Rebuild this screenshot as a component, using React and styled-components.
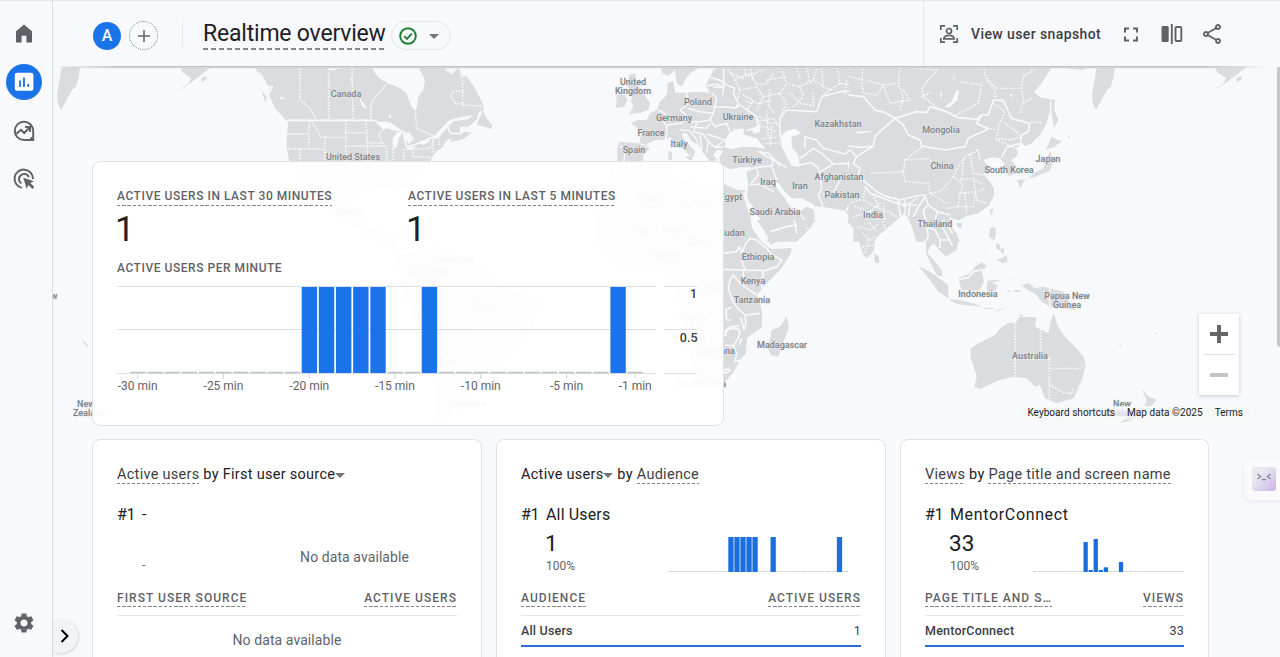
import React from "react";
import styled, { createGlobalStyle } from "styled-components";
import { MdSettings, MdOutlineShare, MdFullscreen } from "react-icons/md";

const Global = createGlobalStyle`
  * { box-sizing: border-box; }
  body { margin: 0; background: #f8f9fc; font-family: Roboto, "Liberation Sans", sans-serif; color: #202124; overflow: hidden; }
`;

const Page = styled.div`
  position: relative;
  display: flex;
  height: 657px;
  overflow: hidden;
  border-top: 1px solid #e6e8eb;
  background: #f8f9fc;
`;

const Sidebar = styled.nav`
  width: 53px;
  flex: none;
  display: flex;
  flex-direction: column;
  align-items: center;
  gap: 12.4px;
  padding: 15px 5px 16px 0;
  border-right: 1px solid #dadce0;
`;

const NavItem = styled.div`
  width: 36px;
  height: 36px;
  border-radius: 50%;
  display: flex;
  align-items: center;
  justify-content: center;
  color: ${(p) => (p.$active ? "#fff" : "#5f6368")};
  background: ${(p) => (p.$active ? "#1a73e8" : "transparent")};
  margin-top: ${(p) => (p.$last ? "auto" : 0)};
`;

const Main = styled.main`
  position: relative;
  flex: 1;
  min-width: 0;
  display: flex;
  flex-direction: column;
`;

const Header = styled.header`
  position: relative;
  z-index: 2;
  flex: none;
  height: 66px;
  display: flex;
  align-items: center;
  background: #f8f9fc;
  padding-left: 40px;
  &::after {
    content: "";
    position: absolute;
    left: 0;
    right: 12px;
    bottom: -2px;
    height: 3px;
    background: linear-gradient(#b4b6b9, #d5d7da 50%, transparent);
    mask-image: linear-gradient(90deg, transparent, #000 60px, #000 calc(100% - 60px), transparent);
  }
`;

const Avatar = styled.div`
  width: 28px;
  height: 28px;
  margin-top: 3px;
  border-radius: 50%;
  background: #1a73e8;
  color: #fff;
  font-size: 16px;
  font-weight: 500;
  display: flex;
  align-items: center;
  justify-content: center;
`;

const AddButton = styled.div`
  width: 29px;
  height: 29px;
  margin: 3px 0 0 8px;
  border-radius: 50%;
  border: 1px dotted #80868b;
  display: flex;
  align-items: center;
  justify-content: center;
`;

const Separator = styled.div`
  width: 1px;
  height: 24px;
  margin: 0 20px 0 24px;
  background: #e4e6e9;
`;

const Title = styled.h1`
  margin: 0;
  height: 31px;
  font-size: 23px;
  line-height: 30px;
  font-weight: 400;
  letter-spacing: -0.2px;
  white-space: nowrap;
  background: repeating-linear-gradient(90deg, #80868b 0 5px, transparent 5px 8px) 0 100% / 100% 2px no-repeat;
`;

const StatusPill = styled.div`
  width: 60px;
  height: 29px;
  margin: 3px 0 0 5px;
  border: 1px solid #e3e5e8;
  border-radius: 15px;
  display: flex;
  align-items: center;
  gap: 12px;
  padding-left: 7px;
`;

const Actions = styled.div`
  margin-left: auto;
  width: 357px;
  height: 100%;
  border-left: 1px solid #e4e6e9;
  display: flex;
  align-items: center;
  color: #5f6368;
  padding-left: 15px;
`;

const ActionLabel = styled.span`
  margin: 0 18px 0 12px;
  width: 130px;
  font-size: 14px;
  letter-spacing: 0.4px;
  font-weight: 500;
  color: #3c4043;
  white-space: nowrap;
`;

const ActionIcon = styled.span`
  display: flex;
  width: 24px;
  margin-right: ${(p) => p.$gap || 0}px;
`;

const MapArea = styled.section`
  position: relative;
  flex: none;
  height: 359px;
  padding: 94px 0 0 39px;
`;

const MapSvg = styled.svg`
  position: absolute;
  left: 0;
  top: 0;
  display: block;
`;

const ZoomControl = styled.div`
  position: absolute;
  right: 41px;
  top: 247px;
  width: 40px;
  height: 81px;
  background: #fff;
  box-shadow: 0 1px 4px rgba(0, 0, 0, 0.2);
  display: flex;
  flex-direction: column;
`;

const ZoomButton = styled.div`
  flex: 1;
  display: flex;
  align-items: center;
  justify-content: center;
  color: ${(p) => (p.$off ? "#c4c4c4" : "#666")};
  &:first-child { background: linear-gradient(#e0e0e0, #e0e0e0) center bottom / 31px 1px no-repeat; }
`;

const Attribution = styled.div`
  position: absolute;
  right: 31px;
  top: 339px;
  height: 14px;
  display: flex;
  gap: 12px;
  padding: 0 6px;
  background: rgba(245, 245, 245, 0.75);
  font-size: 10px;
  line-height: 14px;
  letter-spacing: 0.05px;
  color: #202124;
  white-space: nowrap;
`;

const RealtimeCard = styled.div`
  position: relative;
  width: 632px;
  height: 265px;
  padding: 27px 24px 0;
  border: 1px solid #e0e2e6;
  border-radius: 8px;
  background: rgba(255, 255, 255, 0.945);
`;

const Totals = styled.div`
  display: flex;
`;

const Total = styled.div`
  width: 291.5px;
`;

const Caption = styled.div`
  width: fit-content;
  height: 17px;
  font-size: 12px;
  line-height: 15px;
  font-weight: 500;
  letter-spacing: 0.54px;
  color: #5f6368;
  white-space: nowrap;
  background: ${(p) =>
    p.$plain ? "none" : "repeating-linear-gradient(90deg, #80868b 0 3.4px, transparent 3.4px 5.2px) 0 100% / 100% 1px no-repeat"};
`;

const ColumnHead = styled(Caption)`
  line-height: 17px;
  letter-spacing: 1.03px;
`;

const BigNumber = styled.div`
  margin: 4px 0 0 -2px;
  font-size: 35px;
  line-height: 40px;
  height: 40px;
`;

const ChartCaption = styled.div`
  margin-top: 11px;
  height: 16px;
`;

const Cards = styled.div`
  display: flex;
  gap: 14px;
  padding: 13px 0 0 39px;
`;

const Card = styled.section`
  width: ${(p) => p.$width}px;
  height: 240px;
  flex: none;
  border: 1px solid #e0e2e6;
  border-radius: 8px;
  background: #fff;
  padding: 24px 24px 0;
`;

const CardTitle = styled.h2`
  margin: 0;
  height: 20px;
  display: flex;
  align-items: center;
  font-size: 14.5px;
  font-weight: 400;
  letter-spacing: 0.28px;
  line-height: 19px;
  color: #202124;
  white-space: pre;
`;

const Term = styled.span`
  color: #3c4043;
  background: repeating-linear-gradient(90deg, #80868b 0 3.4px, transparent 3.4px 5px) 0 100% / 100% 1px no-repeat;
`;

const Caret = styled.span`
  border: 5px solid transparent;
  border-top-color: #757575;
  border-bottom: 0;
  margin-top: 2px;
`;

const Rank = styled.div`
  display: flex;
  margin-top: 19px;
  font-size: 16px;
  line-height: 24px;
`;

const RankIndex = styled.span`
  width: 25px;
  letter-spacing: -0.3px;
`;

const RankName = styled.span`
  letter-spacing: ${(p) => p.$spacing || 0}px;
`;

const Metric = styled.div`
  display: flex;
  justify-content: space-between;
  height: 63px;
  padding: 3px 0 0 25px;
`;

const MetricValue = styled.div`
  margin-left: -1px;
  font-size: 22.5px;
  line-height: 27px;
`;

const MetricShare = styled.div`
  font-size: 12px;
  line-height: 18px;
  color: #5f6368;
`;

const MetricDash = styled(MetricShare)`
  padding-top: 26px;
`;

const Empty = styled.div`
  font-size: 14px;
  line-height: 20px;
  letter-spacing: 0.08px;
  color: #5f6368;
  padding: ${(p) => (p.$table ? "14px 0 0" : "17px 48px 0 0")};
  text-align: center;
`;

const TableHead = styled.div`
  display: flex;
  justify-content: space-between;
  height: 26px;
  border-bottom: 1px solid #e3e5e8;
`;

const TableRow = styled.div`
  display: flex;
  justify-content: space-between;
  height: 31px;
  font-size: 12.5px;
  line-height: 30px;
  font-weight: 500;
  letter-spacing: 0.2px;
  color: #3c4043;
  border-bottom: 2px solid #2a70d0;
`;

const RowValue = styled.span`
  font-weight: 400;
`;

const Drawer = styled.div`
  position: absolute;
  left: 53px;
  bottom: 4px;
  width: 25px;
  height: 34px;
  padding-right: 2px;
  border-radius: 0 17px 17px 0;
  background: #f1f3f4;
  box-shadow: 1px 1px 3px rgba(0, 0, 0, 0.15);
  display: flex;
  align-items: center;
  justify-content: center;
`;

const Helper = styled.div`
  position: absolute;
  right: 0;
  top: 458px;
  width: 36px;
  height: 41px;
  padding: 8px;
  border-radius: 8px 0 0 8px;
  background: #fafafc;
  box-shadow: 0 1px 4px rgba(0, 0, 0, 0.08);
`;

const Scrollbar = styled.div`
  position: absolute;
  right: -3px;
  top: 43px;
  width: 6px;
  height: 303px;
  border-radius: 3px;
  background: #c6c7c9;
`;

const LAND = "#dadce0";
const WATER = "#f8f9fc";

const LABELS = [
  ["Canada", 346, 97], ["United States", 353, 160],
  ["United", 633, 85], ["Kingdom", 633, 94], ["Poland", 698, 105], ["Germany", 674, 121],
  ["Ukraine", 738, 120], ["France", 651, 136], ["Italy", 679, 147], ["Spain", 634, 153],
  ["Kazakhstan", 838, 127], ["Mongolia", 941, 133], ["Türkiye", 747, 163], ["Iraq", 768, 185],
  ["Iran", 800, 189], ["Afghanistan", 839, 180], ["Pakistan", 842, 198], ["China", 942, 169],
  ["South Korea", 1009, 173], ["Japan", 1048, 162], ["Saudi Arabia", 775, 215], ["India", 873, 218],
  ["Thailand", 935, 227], ["Egypt", 731, 200], ["Sudan", 732, 236], ["Ethiopia", 758, 260],
  ["Kenya", 753, 284], ["Tanzania", 752, 303], ["Madagascar", 782, 348], ["Botswana", 715, 354],
  ["South Africa", 701, 387], ["Indonesia", 978, 297], ["Papua New", 1067, 299], ["Guinea", 1067, 308],
  ["Australia", 1030, 359], ["New", 1122, 407], ["Zealand", 1122, 416], ["New", 86, 407], ["Zealand", 89, 416],
  ["Mexico", 350, 215], ["Venezuela", 454, 262], ["Colombia", 426, 274], ["Brazil", 484, 310],
  ["Bolivia", 458, 333], ["Peru", 424, 317], ["Chile", 446, 365], ["Argentina", 466, 407],
  ["Algeria", 649, 201], ["Libya", 695, 205], ["Mali", 640, 233], ["Niger", 673, 233],
  ["Chad", 700, 245], ["Nigeria", 667, 258], ["DRC", 709, 290], ["Angola", 692, 321], ["Namibia", 690, 342],
];

const Arctic = () => (
  <g fill={LAND}>
    <path d="M62 66L80 66L79 75L76 87L72 90L67 99L61 110L58 104L57 95L59 83Z" />
    <path d="M180 66L213 66L205 72L200 76L192 82L186 86L172 94L180 89L189 83L191 78L182 72Z" />
    <path d="M201 78l5 -2l1 3l-5 3z" />
  </g>
);

const Provinces = styled.g`
  stroke-width: 5.5px;
  stroke-linecap: round;
  stroke-dasharray: 0.1 9;
`;

function WorldMap() {
  return (
    <MapSvg width="1227" height="363" viewBox="53 67 1227 363">
      <Arctic />
      <g transform="translate(1035 0)"><Arctic /></g>
      <g fill={LAND}>
        <path d="M290 162L425 162L410 185L395 190L360 185L350 200L365 225L395 235L400 255L350 225L310 190Z" />
        <path d="M395 255L440 245L480 265L500 285L540 300L535 325L510 350L490 370L460 400L445 425L435 420L440 350L420 330L405 295Z" />
        <path d="M610 168L650 163L672 162L672 175L700 185L724 184L738 190L745 190L744 198L750 215L752 228L760 240L768 247L772 249L792 248L790 255L780 270L765 285L757 295L760 303L762 312L762 327L747 338L746 353L740 360L733 373L724 383L705 390L695 380L685 340L680 310L675 285L660 268L620 268L600 250L595 225L605 190Z" />
      </g>

      <g transform="translate(260 60) scale(.33333)">
        <g fill={LAND}>
          <path d="M-20 18L0 45L18 75L30 82L27 105L45 145L70 172L85 190L82 215L79 250L85 290L90 310L508 310L520 285L535 270L548 262L555 245L575 232L570 246L610 237L635 218L615 215L600 222L600 200L625 200L650 180L655 160L672 148L668 130L645 85L628 60L618 48L608 52L598 18Z" />
          <path d="M650 195L660 170L668 150L680 175L697 195L695 208L675 200Z" />
          <path d="M5 90L20 112L18 130L8 105Z" />
        </g>
        <g fill={WATER}>
          <path d="M335 18L345 40L358 55L385 70L420 85L440 100L450 130L462 150L470 145L475 110L490 90L495 60L485 40L475 18Z" />
          <path d="M552 16L558 32L575 42L590 28L592 16Z" />
          <path d="M298 112L318 140L320 147L305 138Z" />
          <path d="M350 188L375 184L395 190L428 214L405 212L380 205L368 208Z" />
          <path d="M398 268L398 235L412 215L428 218L418 232L410 262Z" />
          <path d="M428 216L450 218L462 238L446 252L434 235Z" />
          <path d="M432 270L455 260L470 262L450 270Z M478 250L505 238L512 244L490 254Z" />
          <path d="M205 25L240 18L250 22L215 32Z M268 50L280 60L276 68Z M60 112l14 2v3h-14z" />
          <circle cx="390" cy="170" r="4" />
          <path d="M520 230L545 205L565 182L600 172L640 165L625 178L580 184L558 208L530 234Z" />
        </g>
        <g fill="none" stroke={WATER} strokeWidth="5" strokeLinejoin="round">
          <path d="M0 38L22 80L38 80L28 100M80 181H340L365 192L400 205L430 216L440 262L470 252L510 234L535 232L560 195L572 220L605 222" />
          <Provinces>
            <path d="M120 18V120L150 145L170 180M206 28V180M276 18L280 180M382 70L333 128V180M466 150L470 205L520 228M598 18L608 70V135L670 138M608 95L580 92L572 112L590 132L608 130" />
            <path d="M148 184L146 265M85 222H145M155 184L185 232H258M195 232V305M258 184V305M258 218H320M318 184L325 305M258 258H370M88 266L195 268M120 268V305M325 248L370 250L380 265V305M370 208L355 222L368 250M400 270V305M430 270L432 300M460 268L510 265L520 240M460 268L458 290L520 292M520 238V280M535 235L540 260" />
          </Provinces>
        </g>
      </g>

      <g transform="translate(600 60) scale(.33333)">
        <g fill={LAND}>
          <path d="M345 18H790V482L757 480L735 452L665 440L640 438L645 470L635 500L590 545L495 545L468 480L440 410L445 375L440 335L455 322L420 322L390 328L362 312L358 290L370 272L350 270L340 285L352 300L330 304L310 280L300 262L272 240L262 222L250 218L246 228L262 250L285 272L280 290L268 285L245 262L225 245L210 232L195 240L165 240L140 252L150 265L130 285L128 310H52L52 265L58 245L118 250L125 215L92 188L115 180L140 180L150 160L170 150L180 125L195 110L202 98L202 70L220 62L226 98L260 98L295 95L330 98L318 78L325 60L335 40Z" />
          <path d="M180 18L188 42L205 48L225 30L230 70L245 80L258 55L270 40L288 30L300 18Z" />
          <path d="M88 45L105 40L110 70L130 100L150 130L145 150L120 158L88 162L100 138L92 125L98 105L82 80Z" />
          <path d="M50 105L75 105L82 120L72 140L48 145Z" />
          <path d="M205 275h10l2 24h-12z M255 290l22 -3v14h-8z" />
          <path d="M330 60L360 70L365 95L330 98Z" />
        </g>
        <g fill={WATER}>
          <path d="M375 262L376 240L390 216L415 212L425 222L445 228L470 235L497 268L470 262L430 260L395 268Z" />
          <path d="M455 210L482 188L480 215L462 222Z M398 209L432 205L430 225L410 222Z" />
          <path d="M540 230L560 212L585 206L605 220L575 230L575 262L595 285L600 320L575 318L560 290L545 260Z" />
          <path d="M520 362L535 368L555 395L575 415L605 415L640 432L650 452L620 440L598 455L570 440L555 415L535 392Z" />
          <path d="M428 392L440 405L448 430L475 475L500 525L498 545L488 545L462 490L440 440Z" />
          <path d="M318 44L360 18L300 18L296 40L310 50Z" />
        </g>
        <g fill="none" stroke={WATER} strokeWidth="4.5" strokeLinejoin="round">
          <path d="M58 260L75 262L72 305M118 250L150 262M175 150L195 160L190 185L200 200L200 225L195 240M260 98L262 135L240 150L262 170L245 190L200 195M262 145L300 155L340 160M335 98L350 115L340 160L330 180L300 185L275 185M340 82L372 80L368 105M320 78L350 72L372 85M330 52L365 62L372 80M340 142L380 140L405 145L415 130L400 100L405 85L372 72L370 18M405 145L420 135L470 170L475 200L440 212M330 180L345 200L380 190L390 215M270 200L320 205L330 190M240 210L270 212L290 240L295 262M290 190L280 215L310 222L325 245M320 222L375 240L345 262L325 245L320 278M300 225L305 268M345 262L372 262" />
          <path d="M540 230V175L560 150L650 155L665 110L720 95L770 92L790 115M615 265V230L650 240L670 265L710 275L735 282L770 250L790 252M600 295L640 265L665 280L700 312M560 322L520 300L475 275M520 300L515 318L470 322L445 330M515 318L530 360M470 322L475 345L450 375L478 372L520 395M475 275L505 280L525 300L540 320M600 315L635 308L655 325L660 350L665 385L655 405L670 440M700 312L660 335M700 312L745 310L755 285L785 290M745 310L750 340L720 360L700 400L668 402M750 340L785 340M765 385L740 450L760 455M450 430L500 515L570 500L620 490L600 460M505 520L500 545M570 500L625 505" />
          <Provinces>
            <path d="M385 30L405 60L420 90L412 120M405 60L450 40L470 75L500 70L520 40M420 90L470 80L490 110L470 150M490 110L540 100L560 130L540 170M540 100L560 70L600 80L640 60L650 25M560 70L545 30M600 80L610 110L580 140M640 60L690 90L720 70L770 75M690 90L665 110M720 70L710 20M440 125L480 130L520 120M480 170L510 190L540 190M490 200L530 215M490 235L530 232M500 250L540 250M450 20L460 60M590 25L600 55M750 25L760 55L785 50M640 100L640 145M500 60L560 50" />
            <path d="M395 40L430 55M430 105L460 120L440 150M510 90L505 140L525 160M470 185L520 175L540 205M500 155L505 235M515 200L510 260M430 22L440 50L490 30M570 100L600 130L635 135M620 25L632 75M665 25L670 85M735 100L740 60" />
          </Provinces>
        </g>
      </g>

      <g transform="translate(850 60) scale(.33333)">
        <g fill={LAND}>
          <path d="M0 18H615L600 30L575 70L552 95L570 112L600 118L600 150L590 190L570 225L545 250L525 258L515 248L500 265L503 285L485 300L495 315L490 345L475 348L462 310L450 295L425 292L400 300L412 315L430 322L410 335L400 343L420 365L432 385L432 405L418 435L385 460L345 470L325 482L300 472L295 490L320 520L330 545L200 545L185 500L172 468L160 462L130 490L75 535L60 545H10V500L-5 490Z" />
          <path d="M603 118L615 120L613 150L625 180L612 205L605 160Z M588 268L605 230L635 245L610 262Z M600 272L610 300L600 332L555 350L535 355L552 340L580 325Z M500 360L525 358L512 385Z M418 450L430 443L425 468Z M318 490L338 488L325 505Z M422 503L437 503L434 540L420 530Z" />
          <path d="M635 16L720 16L700 30L660 26Z" />
          <circle cx="657" cy="231" r="3" />
        </g>
        <g fill={WATER}>
          <path d="M282 142L305 125L318 92L328 92L322 120L300 142Z M18 215l45 -3v4l-40 5z M270 95l5 0v20h-3z M480 102h6v8h-6z M308 55l12 -8l-10 14z" />
        </g>
        <g fill="none" stroke={WATER} strokeWidth="5" strokeLinejoin="round">
          <path d="M-5 105L40 110L75 150L105 158L135 175L200 155L230 158L240 140L290 155L320 172L380 178L395 165L415 165L430 120L460 122L485 175L540 190L535 215L515 225L512 250M135 175L160 195L175 225L210 240L215 258L285 270L345 260L355 235L415 207L380 190L395 165M135 175L95 210L75 230L70 258L20 290L0 270M-5 258L35 262L70 258M20 290L10 310L30 325L25 345L50 370L80 395L110 410L150 420L200 408L225 405L235 435L262 455L300 465M45 378L60 400L145 432L150 418M155 432L200 435M145 435L152 470M180 430L175 470M225 410L205 440L190 470M510 250L470 262L455 292M235 435L220 450L230 490M262 455L255 480L290 500L310 540M280 480L300 490" />
          <path d="M140 425L165 440L200 415M165 418V470" strokeWidth="4" />
          <Provinces>
            <path d="M0 50L35 60L40 100L80 105L100 75L50 60M40 20L35 60M100 75L145 70L150 20M145 70L160 110L150 150M100 75L120 130L180 120L160 90M205 25L260 30L215 85L220 110L270 150M215 110L245 95M320 165L385 130L395 75L330 65M400 20L410 60L435 90L435 115M410 55L440 85L515 85L520 50L560 25M515 85L520 130L510 160M520 130L545 115M430 130L465 155L445 200L440 240M465 190L500 215L515 235M440 235L480 240L515 230M545 185L580 190M440 240L500 265M415 205L440 210" />
            <path d="M65 340L160 335L165 300L215 262M160 335L165 365L235 370M165 300L240 295L245 320M235 370L240 400L270 395L310 350M310 350L330 310L345 290L385 270M340 300L335 360M360 285L370 340L400 345M385 270L390 300M335 360L370 355L400 375M310 350L340 375L330 400M330 400L380 395L405 385M370 355L380 420M330 400L325 440L290 445M240 400L290 430M325 440L370 440L375 400M380 420L410 430M345 400L350 460" />
            <path d="M10 470L60 455L90 430M45 385L40 420L75 440L115 455L140 470M30 420L0 430M60 455L70 490L30 510M70 490L100 480L130 485M30 510L45 540M100 430L105 480M80 470L95 510M50 480L65 530M15 440L45 450L50 500L20 520M70 405L85 440" />
          </Provinces>
        </g>
      </g>

      <g transform="translate(700 220) scale(.33333)">
        <g fill={LAND}>
          <path d="M440 0H585L540 40L525 60L520 95L500 115L490 105L475 60L460 25Z M522 100L535 108L538 128L525 130Z M170 0H350L320 25L290 42L250 58L210 75L205 50Z" />
          <path d="M260 290L267 320L235 410L212 405L205 385L215 330L240 320Z M655 138L690 155L745 195L745 235L715 215L690 180Z" />
        </g>
        <g fill="none" stroke={WATER} strokeWidth="5" strokeLinejoin="round">
          <path d="M72 100L110 95L118 80L125 100L135 75L150 55L170 60L200 85L210 100L245 120L232 140L195 152L135 150L125 120M72 148L130 150L130 180L120 190M190 152L185 205M90 180L100 165L120 190L135 200L170 225M90 180L85 205L95 235L110 262L135 285L180 280M135 285L138 310L132 330L122 290M95 262L78 270L80 300L92 300M72 335L92 320L118 318M75 350Q75 325 100 325T118 345T100 378L75 375M118 375L125 355M100 378L110 400L105 425L120 420M75 460Q70 445 85 448T75 460" />
          <path d="M210 35L260 20L285 15L290 40M280 0L290 20" />
          <Provinces><path d="M475 20L510 30L540 10M490 40L510 60L525 50M490 80L520 75M505 60L495 100M510 10L530 35M550 5L555 25" /></Provinces>
        </g>
      </g>

      <g transform="translate(920 220) scale(.33333)">
        <g fill={LAND}>
          <path d="M-30 0H90L100 30L115 65L110 90L78 110L60 92L42 70L30 80L22 98L45 125L65 150L68 170L50 165L35 135L20 105L16 60L-5 30Z" />
          <path d="M85 238L120 240L165 252L185 260L110 252Z M115 175L150 160L165 140L185 127L200 138L185 155L192 185L178 212L125 210Z M203 182L250 178L215 188L232 195L228 210L210 215L200 210Z M305 195L325 190L345 205L370 200L430 215L450 250L470 272L430 262L390 262L365 245L350 225L315 205Z" />
          <path d="M210 25L225 22L228 40L222 60L208 52Z M245 115L260 105L262 125L248 130L230 120Z M228 70l10 2l4 20l-12 -5z M240 88l12 -4v18l-8 -4z M195 105l8 -10l-4 10z M275 178l10 1l-8 3z M262 212l8 0v4h-8z M280 210l22 1v4h-20z M190 265l30 -2v4h-30z M225 272l38 -12l-30 14z M298 285l10 -2v5h-10z M110 12l15 0v12l-12 -3z" />
          <path d="M152 385L185 365L225 345L240 325L265 308L285 310L300 290L350 292L345 320L385 340L393 300L402 280L412 315L430 345L465 380L492 410L496 440L485 480L462 535L410 550L375 535L360 495L345 500L320 475L280 470L240 480L205 495L180 508L163 500L170 470L152 410Z" />
          <path d="M666 506L685 530L710 540L690 562L673 556L680 540Z M645 570L675 562L640 600L600 610Z M405 570L435 570L425 592L410 590Z M590 365L607 378L603 380Z M704 338h6v4h-6z M932 10l5 4v5z" />
        </g>
        <g fill="none" stroke={WATER} strokeWidth="5">
          <path d="M15 65L25 50L20 20L-10 0M20 20L45 30L60 60L88 60L70 25L50 5M60 60L60 85M88 60L98 78M70 0L98 40M118 178L145 172L160 155L190 148M389 205V262M25 98L40 108" />
          <Provinces><path d="M285 312V470M285 417H388M362 330V417M388 417V538M390 445L480 445L492 435M390 495L430 518L455 520L460 505" /></Provinces>
        </g>
      </g>

      <path d="M83 341l5 5" stroke={LAND} strokeWidth="1.5" />
      <g fontFamily="Roboto, sans-serif" fontSize="9" fontWeight="500" fill="#7c8186" stroke="#e6e8eb" strokeWidth="0.8" paintOrder="stroke" textAnchor="middle">
        {LABELS.map(([name, x, y]) => (
          <text key={name + x} x={x} y={y}>{name}</text>
        ))}
        <text x="54" y="299">w</text>
      </g>
    </MapSvg>
  );
}

const MINUTES = [...Array(30).keys()];
const ACTIVE = { 10: 1, 11: 1, 12: 1, 13: 1, 14: 1, 17: 1, 28: 1 };
const VIEWS = { 10: 30, 11: 2, 12: 33, 13: 2, 14: 4.7, 17: 10 };
const TICKS = [["-30 min", 20.7], ["-25 min", 106.5], ["-20 min", 192.3], ["-15 min", 278], ["-10 min", 363.8], ["-5 min", 449.5], ["-1 min", 518.2]];

const ChartSvg = styled.svg`
  display: block;
  overflow: visible;
  margin-top: ${(p) => p.$drop || 0}px;
`;

function MinuteChart() {
  return (
    <ChartSvg width="582" height="112" viewBox="0 0 582 112">
      {[9.5, 52.5, 96.5].map((y) => (
        <path key={y} d={`M0 ${y}H539M547 ${y}H580`} stroke="#dcdee1" />
      ))}
      {MINUTES.map((i) =>
        ACTIVE[i] ? (
          <rect key={i} x={13.2 + 17.15 * i} y="10" width="15.4" height="86" fill="#1a73e8" />
        ) : (
          <rect key={i} x={13.2 + 17.15 * i} y="94.7" width="15.4" height="1.6" fill="#c3c5c8" />
        )
      )}
      {TICKS.map(([label, x]) => (
        <g key={label}>
          <path d={`M${x} 97V102`} stroke="#d0d2d5" />
          <text x={x} y="113" fontSize="12" fill="#5f6368" textAnchor="middle">{label}</text>
        </g>
      ))}
      <g fontSize="12.5" fontWeight="500" fill="#3c4043" textAnchor="end">
        <text x="580" y="21">1</text>
        <text x="580.5" y="65">0.5</text>
      </g>
    </ChartSvg>
  );
}

function Sparkline({ pitch, width, data, unit, right }) {
  return (
    <ChartSvg $drop={4} width={pitch * 30 + right} height="38" viewBox={`0 0 ${pitch * 30 + right} 38`}>
      {MINUTES.map((i) =>
        data[i] ? (
          <rect key={i} x={pitch * i} y={38 - data[i] * unit} width={width} height={data[i] * unit} fill="#1a6fdf" />
        ) : (
          <rect key={i} x={pitch * i} y="37" width={width} height="1" fill="#d5d7da" />
        )
      )}
    </ChartSvg>
  );
}

const HomeIcon = () => (
  <svg width="24" height="24" viewBox="0 0 24 24" fill="currentColor"><path d="M4 20.6V9.2L12 2.6l8 6.6v11.400h-5.600v-6.800H9.600v6.800z" /></svg>
);
const ReportsIcon = () => (
  <svg width="24" height="24" viewBox="0 0 24 24"><rect x="2.800" y="2.800" width="18.600" height="18" rx="2" fill="#fff" /><path d="M8 10.500V17M12 7.500V17M16.200 14V17" stroke="#1a73e8" strokeWidth="1.800" /></svg>
);
const ExploreIcon = () => (
  <svg width="24" height="24" viewBox="0 0 24 24" fill="none" stroke="currentColor" strokeWidth="2"><path d="M12 2.700a9.200 9.200 0 1 0 0 18.400h9.200V12A9.200 9.200 0 0 0 12 2.700zM4.500 14.800L9 10.800l3.200 3.200 5.200-5.200M13 8h5v5" /><path d="M17 20.500l3.500-3.500v3.500z" fill="currentColor" stroke="none" /></svg>
);
const AdsIcon = () => (
  <svg width="24" height="24" viewBox="0 0 24 24" fill="none" stroke="currentColor" strokeWidth="2"><path d="M9.800 20.800A9.200 9.200 0 1 1 21 12M9.300 16.500A5.200 5.200 0 1 1 16.900 10" /><path d="M11.200 10.800l10.800 3.500-3.700 1.800 4 4-1.800 1.800-4-4-1.800 3.800z" fill="currentColor" stroke="none" /></svg>
);
const SnapshotIcon = () => (
  <svg width="20" height="20" viewBox="0 0 20 20" fill="none" stroke="currentColor" strokeWidth="1.700"><path d="M1.800 6V1.800H6M14 1.800h4.200V6M18.200 14v4.200H14M6 18.200H1.800V14" /><circle cx="10" cy="7" r="2.500" /><path d="M4.800 14.800c.4-2.400 2.600-3.400 5.200-3.400s4.800 1 5.200 3.400z" /></svg>
);
const CompareIcon = () => (
  <svg width="24" height="24" viewBox="0 0 24 24"><rect x="1.500" y="4" width="7.200" height="16" rx="1.500" fill="currentColor" /><path d="M11.800 2v20" stroke="currentColor" strokeWidth="1.900" /><rect x="15.500" y="5" width="5.800" height="14" rx="1" fill="none" stroke="currentColor" strokeWidth="1.900" /></svg>
);

export default function App() {
  return (
    <>
      <Global />
      <Page>
        <Sidebar>
          <NavItem><HomeIcon /></NavItem>
          <NavItem $active><ReportsIcon /></NavItem>
          <NavItem><ExploreIcon /></NavItem>
          <NavItem><AdsIcon /></NavItem>
          <NavItem $last><MdSettings size={24} /></NavItem>
        </Sidebar>
        <Main>
          <Header>
            <Avatar>A</Avatar>
            <AddButton>
              <svg width="12" height="12" viewBox="0 0 12 12"><path d="M6 0v12M0 6h12" stroke="#5f6368" strokeWidth="1.500" /></svg>
            </AddButton>
            <Separator />
            <Title>Realtime overview</Title>
            <StatusPill>
              <svg width="18" height="18" viewBox="0 0 18 18" fill="none" stroke="#1e7e34" strokeWidth="1.900"><circle cx="9" cy="9" r="7.800" /><path d="M5.200 9.200l2.700 2.700 5-5.200" /></svg>
              <Caret />
            </StatusPill>
            <Actions>
              <SnapshotIcon />
              <ActionLabel>View user snapshot</ActionLabel>
              <ActionIcon $gap={17}><MdFullscreen size={25} /></ActionIcon>
              <ActionIcon $gap={16}><CompareIcon /></ActionIcon>
              <ActionIcon><MdOutlineShare size={24} /></ActionIcon>
            </Actions>
          </Header>
          <MapArea>
            <WorldMap />
            <ZoomControl>
              <ZoomButton><svg width="18" height="18"><path d="M9 0v18M0 9h18" stroke="currentColor" strokeWidth="4" /></svg></ZoomButton>
              <ZoomButton $off><svg width="18" height="18"><path d="M0 9h18" stroke="currentColor" strokeWidth="4" /></svg></ZoomButton>
            </ZoomControl>
            <Attribution><span>Keyboard shortcuts</span><span>Map data ©2025</span><span>Terms</span></Attribution>
            <RealtimeCard>
              <Totals>
                <Total><Caption>ACTIVE USERS IN LAST 30 MINUTES</Caption><BigNumber>1</BigNumber></Total>
                <Total><Caption>ACTIVE USERS IN LAST 5 MINUTES</Caption><BigNumber>1</BigNumber></Total>
              </Totals>
              <ChartCaption><Caption $plain>ACTIVE USERS PER MINUTE</Caption></ChartCaption>
              <MinuteChart />
            </RealtimeCard>
          </MapArea>
          <Cards>
            <Card $width={390}>
              <CardTitle><Term>Active users</Term> by First user source<Caret /></CardTitle>
              <Rank><RankIndex>#1</RankIndex><RankName>-</RankName></Rank>
              <Metric><MetricDash>-</MetricDash><Empty>No data available</Empty></Metric>
              <TableHead><ColumnHead>FIRST USER SOURCE</ColumnHead><ColumnHead>ACTIVE USERS</ColumnHead></TableHead>
              <Empty $table>No data available</Empty>
            </Card>
            <Card $width={390}>
              <CardTitle>Active users<Caret /> by <Term>Audience</Term></CardTitle>
              <Rank><RankIndex>#1</RankIndex><RankName $spacing={0.15}>All Users</RankName></Rank>
              <Metric>
                <div><MetricValue>1</MetricValue><MetricShare>100%</MetricShare></div>
                <Sparkline pitch={6.03} width={5.3} data={ACTIVE} unit={35} right={12} />
              </Metric>
              <TableHead><ColumnHead>AUDIENCE</ColumnHead><ColumnHead>ACTIVE USERS</ColumnHead></TableHead>
              <TableRow><span>All Users</span><RowValue>1</RowValue></TableRow>
            </Card>
            <Card $width={309}>
              <CardTitle><Term>Views</Term> by <Term>Page title and screen name</Term></CardTitle>
              <Rank><RankIndex>#1</RankIndex><RankName $spacing={0.65}>MentorConnect</RankName></Rank>
              <Metric>
                <div><MetricValue>33</MetricValue><MetricShare>100%</MetricShare></div>
                <Sparkline pitch={5.05} width={4.3} data={VIEWS} unit={1} right={0} />
              </Metric>
              <TableHead><ColumnHead>PAGE TITLE AND S…</ColumnHead><ColumnHead>VIEWS</ColumnHead></TableHead>
              <TableRow><span>MentorConnect</span><RowValue>33</RowValue></TableRow>
            </Card>
          </Cards>
        </Main>
        <Drawer>
          <svg width="10" height="14" viewBox="0 0 10 14"><path d="M1.500 1L7.500 7l-6 6" fill="none" stroke="#000" strokeWidth="2" /></svg>
        </Drawer>
        <Helper>
          <svg width="24" height="24" viewBox="0 0 24 24">
            <defs><linearGradient id="face" x1="0" y1="0" x2="1" y2="1"><stop offset=".3" stopColor="#e9e9f1" /><stop offset="1" stopColor="#cdb2e6" /></linearGradient></defs>
            <rect width="24" height="24" rx="3" fill="url(#face)" />
            <path d="M5.500 7l3 2.500-3 2.500M18.500 7l-3 2.500 3 2.500M10 12q2 1.500 4 0" fill="none" stroke="#85858f" strokeWidth="1.300" />
          </svg>
        </Helper>
        <Scrollbar />
      </Page>
    </>
  );
}
